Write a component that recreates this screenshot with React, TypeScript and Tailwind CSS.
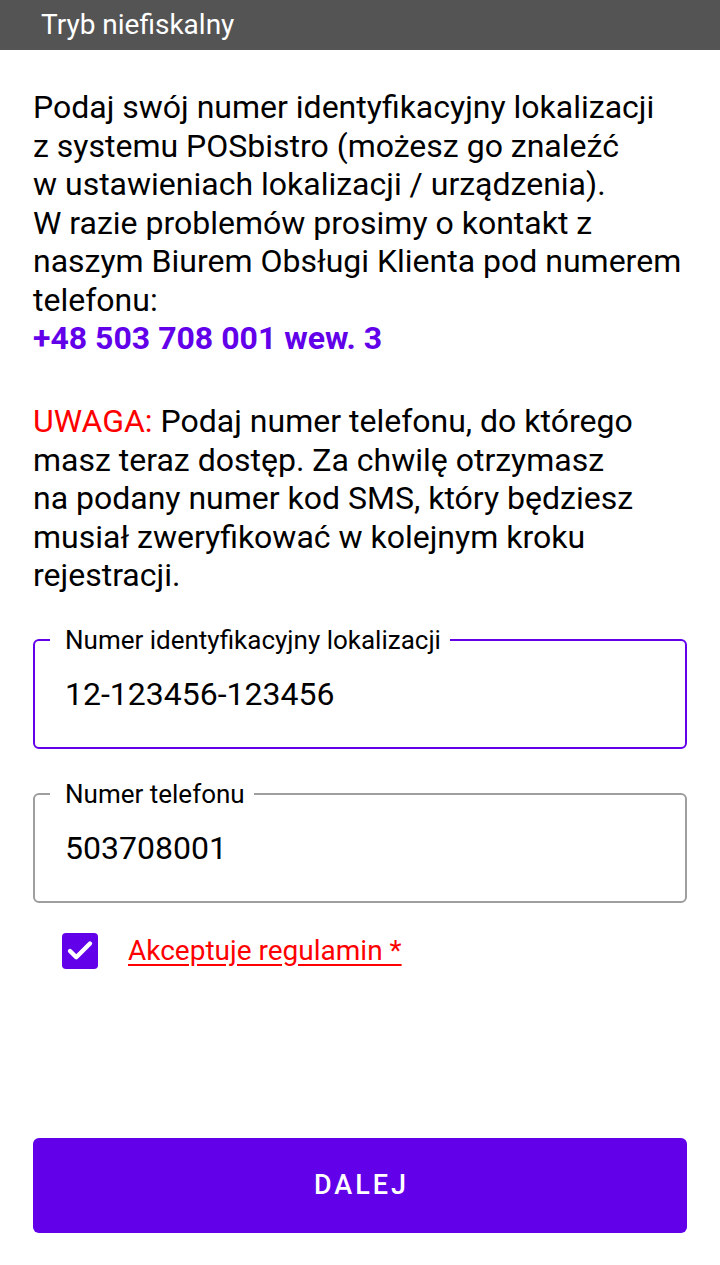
import { Check } from "lucide-react"

export default function App() {
  return (
    <div className="min-h-[1265px] w-[720px] bg-white font-['Roboto',sans-serif] text-black">
      {/* Top bar */}
      <div className="flex h-[50px] items-center bg-[#545454] px-[41px]">
        <span className="text-[28px] text-white">Tryb niefiskalny</span>
      </div>

      <div className="px-[33px]">
        {/* Info text */}
        <p className="mt-[38px] text-[32px] leading-[38.5px]">
          Podaj swój numer identyfikacyjny lokalizacji
          <br />z systemu POSbistro (możesz go znaleźć
          <br />w ustawieniach lokalizacji / urządzenia).
          <br />W razie problemów prosimy o kontakt z
          <br />naszym Biurem Obsługi Klienta pod numerem
          <br />telefonu:
        </p>
        <p className="text-[32px] font-bold leading-[39px] text-[#6200ea]">+48 503 708 001 wew. 3</p>

        <p className="mt-[44px] text-[32px] leading-[38.5px]">
          <span className="text-[#ff0000]">UWAGA:</span> Podaj numer telefonu, do którego
          <br />masz teraz dostęp. Za chwilę otrzymasz
          <br />na podany numer kod SMS, który będziesz
          <br />musiał zweryfikować w kolejnym kroku
          <br />rejestracji.
        </p>

        {/* Fields */}
        <div className="relative mt-[44px] flex h-[110px] items-center rounded-[6px] border-2 border-[#6200ea] pl-[30px]">
          <span className="absolute -top-[16px] left-[15px] bg-white pl-[15px] pr-[9px] text-[26px] leading-[30px]">
            Numer identyfikacyjny lokalizacji
          </span>
          <span className="text-[32px]">12-123456-123456</span>
        </div>

        <div className="relative mt-[44px] flex h-[110px] items-center rounded-[6px] border-2 border-[#9e9e9e] pl-[30px]">
          <span className="absolute -top-[16px] left-[15px] bg-white pl-[15px] pr-[9px] text-[26px] leading-[30px]">
            Numer telefonu
          </span>
          <span className="text-[32px]">503708001</span>
        </div>

        {/* Checkbox */}
        <div className="mt-[27px] flex items-center pl-[29px]">
          <div className="flex h-[36px] w-[36px] items-center justify-center rounded-[4px] bg-[#6200ea]">
            <Check className="h-[30px] w-[30px] text-white" strokeWidth={3.5} />
          </div>
          <span className="ml-[30px] text-[28px] text-[#ff0000] underline underline-offset-[4px]">
            Akceptuje regulamin *
          </span>
        </div>

        {/* Button */}
        <button className="mt-[166px] flex h-[95px] w-full items-center justify-center rounded-[6px] bg-[#6200ea] pl-[3px] text-[27px] font-medium tracking-[3px] text-white">
          DALEJ
        </button>
      </div>
    </div>
  )
}
